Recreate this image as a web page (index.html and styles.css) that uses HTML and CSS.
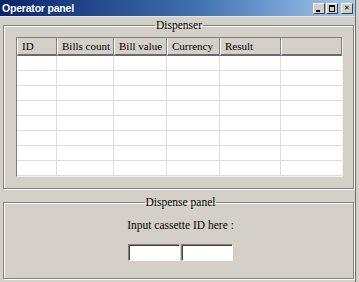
FILE: index.html
```html
<!DOCTYPE html>
<html lang="en">
  <head>
    <meta charset="UTF-8" />
    <title>Operator panel</title>
    <link rel="stylesheet" href="styles.css">
  </head>
  <body>
    <div class="window">
      <div class="titlebar">
        <span class="title">Operator panel</span>
        <div class="controls">
          <span class="ctl ctl-min"><i></i></span>
          <span class="ctl ctl-max"><i></i></span>
          <span class="ctl ctl-close">&#x2715;</span>
        </div>
      </div>

      <fieldset class="group group-dispenser">
        <legend>Dispenser</legend>
        <div class="list">
          <table class="grid">
            <colgroup>
              <col style="width: 40px" />
              <col style="width: 57px" />
              <col style="width: 53px" />
              <col style="width: 53px" />
              <col style="width: 61px" />
              <col />
            </colgroup>
            <thead>
              <tr>
                <th>ID</th>
                <th>Bills count</th>
                <th>Bill value</th>
                <th>Currency</th>
                <th>Result</th>
                <th></th>
              </tr>
            </thead>
            <tbody>
              <tr><td></td><td></td><td></td><td></td><td></td><td></td></tr>
              <tr><td></td><td></td><td></td><td></td><td></td><td></td></tr>
              <tr><td></td><td></td><td></td><td></td><td></td><td></td></tr>
              <tr><td></td><td></td><td></td><td></td><td></td><td></td></tr>
              <tr><td></td><td></td><td></td><td></td><td></td><td></td></tr>
              <tr><td></td><td></td><td></td><td></td><td></td><td></td></tr>
              <tr><td></td><td></td><td></td><td></td><td></td><td></td></tr>
              <tr><td></td><td></td><td></td><td></td><td></td><td></td></tr>
            </tbody>
          </table>
        </div>
      </fieldset>

      <fieldset class="group group-dispense">
        <legend>Dispense panel</legend>
        <p class="prompt">Input cassette ID here :</p>
        <div class="inputs">
          <input type="text" class="cassette" />
          <input type="text" class="cassette" />
        </div>
      </fieldset>
    </div>
  </body>
</html>
```

FILE: styles.css
```css
/* Base */
body {
  margin: 0;
  background-color: #d4d0c8;
  font-family: "Liberation Serif", "Times New Roman", serif;
  font-size: 11.5px;
  color: #000;
}

/* Window frame */
.window {
  width: 356px;
  height: 282px;
  box-sizing: border-box;
  border-right: 1px solid #6f6d68;
  background-color: #d4d0c8;
}

/* Title bar */
.titlebar {
  height: 16px;
  display: flex;
  align-items: center;
  justify-content: space-between;
  padding: 0 2px 0 2px;
  background: linear-gradient(to right, #0a246a 0%, #3f70b0 55%, #a6caf0 100%);
  border-bottom: 1px solid #e8e6e0;
}
.title {
  font-family: "Liberation Sans", Arial, sans-serif;
  font-weight: bold;
  font-size: 10.5px;
  color: #fff;
  letter-spacing: -0.2px;
}
.controls {
  display: flex;
  gap: 1px;
}
.ctl {
  width: 10px;
  height: 9px;
  background-color: #d4d0c8;
  border: 1px solid;
  border-color: #fff #404040 #404040 #fff;
  position: relative;
  font-family: "DejaVu Sans", sans-serif;
  font-size: 7px;
  font-weight: bold;
  line-height: 9px;
  text-align: center;
}
.ctl-close {
  margin-left: 2px;
}
.ctl-min i {
  position: absolute;
  left: 2px;
  bottom: 1px;
  width: 4px;
  height: 2px;
  background-color: #000;
}
.ctl-max i {
  position: absolute;
  left: 2px;
  top: 1px;
  width: 4px;
  height: 4px;
  border: 1px solid #000;
  border-top-width: 2px;
}

/* Group boxes */
.group {
  margin: 1px 1px 0 3px;
  border: 1px solid #808080;
  box-shadow: inset 1px 1px 0 #fff, 1px 1px 0 #fff;
  min-width: 0;
}
.group legend {
  margin: 0 auto;
  padding: 0 1px;
  line-height: 14px;
}
.group-dispenser {
  padding: 5px 11px 11px 12px;
}
.group-dispense {
  margin-top: 6px;
  padding: 9px 0 17px 4px;
  text-align: center;
}

/* List view */
.list {
  width: 325px;
  border: 1px solid;
  border-color: #808080 #f0f0f0 #f0f0f0 #808080;
  background-color: #fff;
}
.grid {
  width: 100%;
  table-layout: fixed;
  border-collapse: separate;
  border-spacing: 0;
}
.grid th {
  height: 16px;
  padding: 0 3px 0 4px;
  text-align: left;
  font-size: 11px;
  font-weight: normal;
  white-space: nowrap;
  overflow: hidden;
  background-color: #d4d0c8;
  border-left: 1px solid #fff;
  border-right: 1px solid #808080;
  border-bottom: 2px solid #6a6a6a;
}
.grid td {
  height: 14px;
  padding: 0;
  border-right: 1px solid #dcdcdc;
  border-bottom: 1px solid #dcdcdc;
}
.grid td:last-child {
  border-right: 0;
}

/* Dispense panel */
.prompt {
  margin: 0;
  line-height: 14px;
}
.inputs {
  display: flex;
  justify-content: center;
  gap: 1px;
  margin-top: 12px;
}
.cassette {
  width: 52px;
  height: 17px;
  box-sizing: border-box;
  margin: 0;
  padding: 0 2px;
  border: 1px solid;
  border-color: #808080 #fff #fff #808080;
  box-shadow: inset 1px 1px 0 #404040;
  background-color: #fff;
  font: inherit;
}
```
